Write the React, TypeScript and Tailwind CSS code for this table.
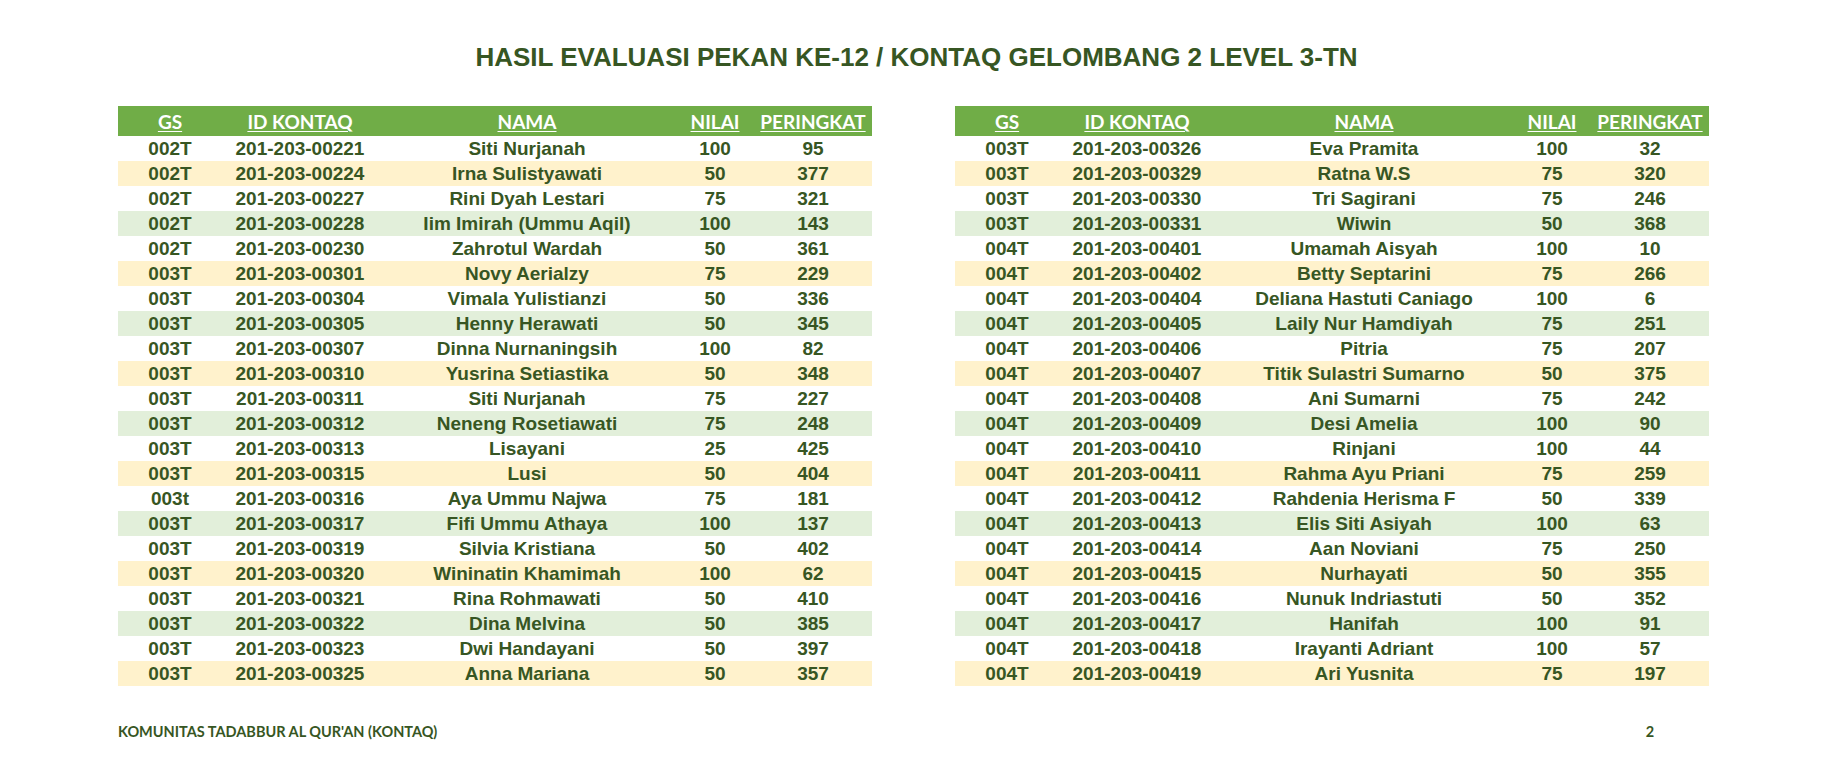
type Row = [string, string, string, number, number];

const left: Row[] = [
  ["002T", "201-203-00221", "Siti Nurjanah", 100, 95],
  ["002T", "201-203-00224", "Irna Sulistyawati", 50, 377],
  ["002T", "201-203-00227", "Rini Dyah Lestari", 75, 321],
  ["002T", "201-203-00228", "Iim Imirah (Ummu Aqil)", 100, 143],
  ["002T", "201-203-00230", "Zahrotul Wardah", 50, 361],
  ["003T", "201-203-00301", "Novy Aerialzy", 75, 229],
  ["003T", "201-203-00304", "Vimala Yulistianzi", 50, 336],
  ["003T", "201-203-00305", "Henny Herawati", 50, 345],
  ["003T", "201-203-00307", "Dinna Nurnaningsih", 100, 82],
  ["003T", "201-203-00310", "Yusrina Setiastika", 50, 348],
  ["003T", "201-203-00311", "Siti Nurjanah", 75, 227],
  ["003T", "201-203-00312", "Neneng Rosetiawati", 75, 248],
  ["003T", "201-203-00313", "Lisayani", 25, 425],
  ["003T", "201-203-00315", "Lusi", 50, 404],
  ["003t", "201-203-00316", "Aya Ummu Najwa", 75, 181],
  ["003T", "201-203-00317", "Fifi Ummu Athaya", 100, 137],
  ["003T", "201-203-00319", "Silvia Kristiana", 50, 402],
  ["003T", "201-203-00320", "Wininatin Khamimah", 100, 62],
  ["003T", "201-203-00321", "Rina Rohmawati", 50, 410],
  ["003T", "201-203-00322", "Dina Melvina", 50, 385],
  ["003T", "201-203-00323", "Dwi Handayani", 50, 397],
  ["003T", "201-203-00325", "Anna Mariana", 50, 357],
];

const right: Row[] = [
  ["003T", "201-203-00326", "Eva Pramita", 100, 32],
  ["003T", "201-203-00329", "Ratna W.S", 75, 320],
  ["003T", "201-203-00330", "Tri Sagirani", 75, 246],
  ["003T", "201-203-00331", "Wiwin", 50, 368],
  ["004T", "201-203-00401", "Umamah Aisyah", 100, 10],
  ["004T", "201-203-00402", "Betty Septarini", 75, 266],
  ["004T", "201-203-00404", "Deliana Hastuti Caniago", 100, 6],
  ["004T", "201-203-00405", "Laily Nur Hamdiyah", 75, 251],
  ["004T", "201-203-00406", "Pitria", 75, 207],
  ["004T", "201-203-00407", "Titik Sulastri Sumarno", 50, 375],
  ["004T", "201-203-00408", "Ani Sumarni", 75, 242],
  ["004T", "201-203-00409", "Desi Amelia", 100, 90],
  ["004T", "201-203-00410", "Rinjani", 100, 44],
  ["004T", "201-203-00411", "Rahma Ayu Priani", 75, 259],
  ["004T", "201-203-00412", "Rahdenia Herisma F", 50, 339],
  ["004T", "201-203-00413", "Elis Siti Asiyah", 100, 63],
  ["004T", "201-203-00414", "Aan Noviani", 75, 250],
  ["004T", "201-203-00415", "Nurhayati", 50, 355],
  ["004T", "201-203-00416", "Nunuk Indriastuti", 50, 352],
  ["004T", "201-203-00417", "Hanifah", 100, 91],
  ["004T", "201-203-00418", "Irayanti Adriant", 100, 57],
  ["004T", "201-203-00419", "Ari Yusnita", 75, 197],
];

const stripes = ["bg-white", "bg-[#fff2cc]", "bg-white", "bg-[#e2efda]"];
const cols = "grid grid-cols-[104px_156px_298px_78px_118px]";

const ScoreTable = ({ rows }: { rows: Row[] }) => {
  return (
    <div className="w-[754px]">
      <div
        className={`${cols} h-[30px] items-center bg-[#70ad47] text-white text-center font-bold text-[19px] font-['Lato',sans-serif]`}
      >
        {["GS", "ID KONTAQ", "NAMA", "NILAI", "PERINGKAT"].map((h) => (
          <div key={h}>
            <span className="underline underline-offset-2 decoration-1">{h}</span>
          </div>
        ))}
      </div>
      {rows.map((r, i) => (
        <div
          key={r[1]}
          className={`${cols} h-[25px] items-center text-center ${stripes[i % 4]}`}
        >
          {r.map((cell, j) => (
            <div key={j} className="whitespace-nowrap">
              {cell}
            </div>
          ))}
        </div>
      ))}
    </div>
  );
};

export default function App() {
  return (
    <div className="w-[1825px] h-[760px] bg-white text-[#375623] font-['Liberation_Sans',Arial,sans-serif] font-bold text-[19px] leading-[25px] pt-[42px]">
      <h1 className="text-center text-[26px] leading-[30px] pl-[8px]">
        HASIL EVALUASI PEKAN KE-12 / KONTAQ GELOMBANG 2 LEVEL 3-TN
      </h1>
      <div className="flex gap-[83px] pl-[118px] mt-[34px]">
        <ScoreTable rows={left} />
        <ScoreTable rows={right} />
      </div>
      <div className="flex gap-[83px] pl-[118px] mt-[37px] font-['Lato',sans-serif] text-[14.5px] leading-[18px]">
        <div className="w-[754px]">KOMUNITAS TADABBUR AL QUR'AN (KONTAQ)</div>
        <div className="w-[754px] flex justify-end">
          <div className="w-[118px] text-center">2</div>
        </div>
      </div>
    </div>
  );
}
